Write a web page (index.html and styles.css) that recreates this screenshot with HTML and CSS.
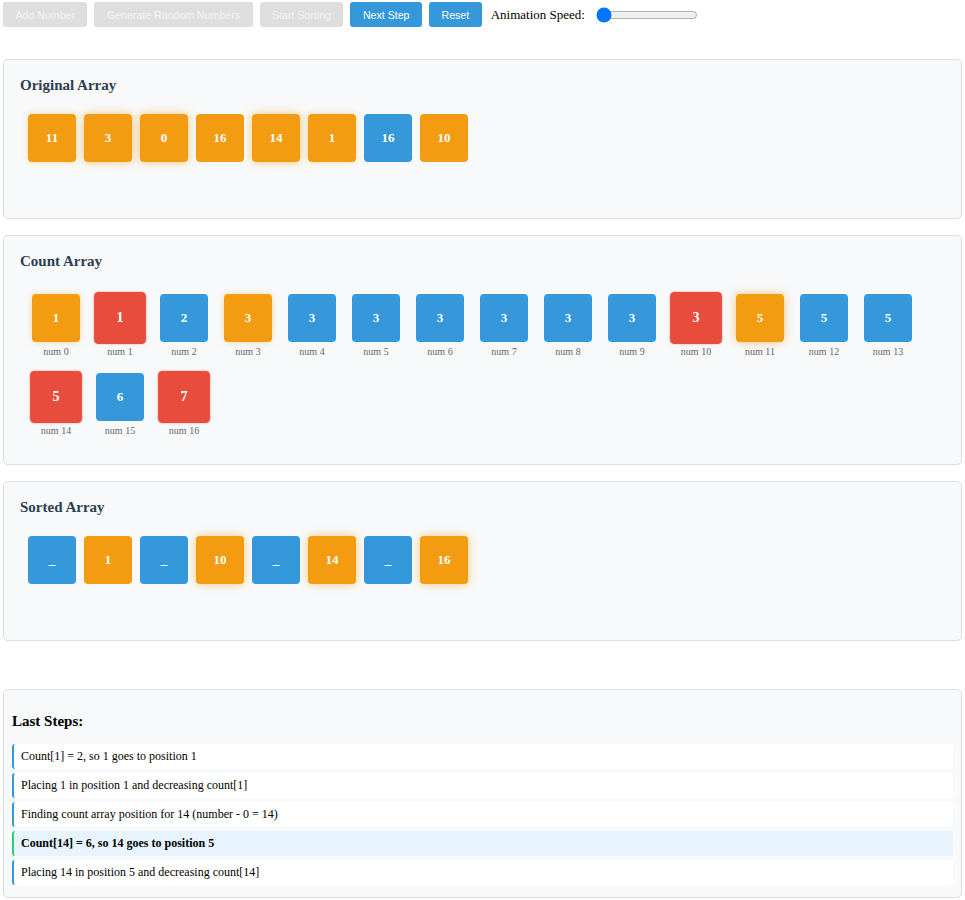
FILE: index.html
```html
<!DOCTYPE html>
<html>
<head>
<meta charset="utf-8">
<title>Counting Sort Visualizer</title>
<link rel="stylesheet" href="styles.css">
</head>
<body>
<div class="controls">
  <button class="btn" disabled>Add Number</button>
  <button class="btn" disabled>Generate Random Numbers</button>
  <button class="btn" disabled>Start Sorting</button>
  <button class="btn active">Next Step</button>
  <button class="btn active">Reset</button>
  <label class="speed-label">Animation Speed:</label>
  <input class="speed" type="range" min="1" max="10" value="1">
</div>

<section class="card">
  <h3 class="card-title">Original Array</h3>
  <div class="array">
    <div class="box orange glow-soft">11</div>
    <div class="box orange glow">3</div>
    <div class="box orange glow">0</div>
    <div class="box orange">16</div>
    <div class="box orange glow">14</div>
    <div class="box orange glow-soft">1</div>
    <div class="box blue">16</div>
    <div class="box orange">10</div>
  </div>
</section>

<section class="card">
  <h3 class="card-title">Count Array</h3>
  <div class="array count">
    <div class="item"><div class="box orange glow-soft">1</div><span class="label">num 0</span></div>
    <div class="item"><div class="box red">1</div><span class="label">num 1</span></div>
    <div class="item"><div class="box blue">2</div><span class="label">num 2</span></div>
    <div class="item"><div class="box orange glow-soft">3</div><span class="label">num 3</span></div>
    <div class="item"><div class="box blue">3</div><span class="label">num 4</span></div>
    <div class="item"><div class="box blue">3</div><span class="label">num 5</span></div>
    <div class="item"><div class="box blue">3</div><span class="label">num 6</span></div>
    <div class="item"><div class="box blue">3</div><span class="label">num 7</span></div>
    <div class="item"><div class="box blue">3</div><span class="label">num 8</span></div>
    <div class="item"><div class="box blue">3</div><span class="label">num 9</span></div>
    <div class="item"><div class="box red">3</div><span class="label">num 10</span></div>
    <div class="item"><div class="box orange glow">5</div><span class="label">num 11</span></div>
    <div class="item"><div class="box blue">5</div><span class="label">num 12</span></div>
    <div class="item"><div class="box blue">5</div><span class="label">num 13</span></div>
    <div class="item"><div class="box red">5</div><span class="label">num 14</span></div>
    <div class="item"><div class="box blue">6</div><span class="label">num 15</span></div>
    <div class="item"><div class="box red">7</div><span class="label">num 16</span></div>
  </div>
</section>

<section class="card">
  <h3 class="card-title">Sorted Array</h3>
  <div class="array">
    <div class="box blue">_</div>
    <div class="box orange">1</div>
    <div class="box blue">_</div>
    <div class="box orange glow">10</div>
    <div class="box blue">_</div>
    <div class="box orange glow">14</div>
    <div class="box blue">_</div>
    <div class="box orange glow">16</div>
  </div>
</section>

<section class="card steps-card">
  <h3 class="steps-title">Last Steps:</h3>
  <div class="step">Count[1] = 2, so 1 goes to position 1</div>
  <div class="step">Placing 1 in position 1 and decreasing count[1]</div>
  <div class="step">Finding count array position for 14 (number - 0 = 14)</div>
  <div class="step current">Count[14] = 6, so 14 goes to position 5</div>
  <div class="step">Placing 14 in position 5 and decreasing count[14]</div>
</section>
</body>
</html>
```

FILE: styles.css
```css
body {
  margin: 0;
  padding: 2px 3px;
  font-family: "Liberation Serif", "Times New Roman", serif;
  background: #fff;
  color: #000;
}

.controls {
  display: flex;
  align-items: center;
  gap: 7px;
  margin-bottom: 32px;
}

.btn {
  font-family: "Liberation Sans", Arial, sans-serif;
  font-size: 10.6px;
  height: 25px;
  padding: 0 12.5px;
  border: none;
  border-radius: 3px;
  background: #3498db;
  color: #fff;
}

.btn:disabled {
  background: #dedede;
  color: #f4f4f4;
}

.speed-label {
  font-size: 13px;
  margin-left: 2px;
}

.speed {
  width: 102px;
  margin: 0 0 0 4px;
  accent-color: #0075ff;
}

.card {
  background: #f8f9fa;
  border: 1px solid #ddd;
  border-radius: 5px;
  padding: 16px;
  margin-bottom: 16px;
}

.card-title {
  margin: 0 0 12px;
  font-size: 15px;
  line-height: 18px;
  color: #2c3e50;
}

.array {
  display: flex;
  flex-wrap: wrap;
  padding: 4px;
  min-height: 96px;
  box-sizing: border-box;
}

.box {
  width: 48px;
  height: 48px;
  margin: 4px;
  border-radius: 4px;
  display: flex;
  align-items: center;
  justify-content: center;
  color: #fff;
  font-weight: bold;
  font-size: 13px;
}

.orange { background: #f39c12; }
.blue { background: #3498db; }
.red {
  background: #e74c3c;
  transform: scale(1.08);
  box-shadow: 0 0 2px rgba(231, 76, 60, 0.6);
}

.glow { box-shadow: 0 0 10px rgba(243, 156, 18, 0.55); }
.glow-soft { box-shadow: 0 0 6px rgba(243, 156, 18, 0.35); }

.count .item {
  width: 64px;
  padding: 8px;
  box-sizing: border-box;
  display: flex;
  flex-direction: column;
  align-items: center;
}

.count .box {
  margin: 0;
  flex-shrink: 0;
}

.label {
  margin-top: 4px;
  font-size: 10px;
  line-height: 11px;
  color: #666;
  white-space: nowrap;
}

.steps-card {
  margin-top: 48px;
  padding: 8px;
}

.steps-title {
  margin: 14px 0;
  font-size: 15px;
  line-height: 18px;
}

.step {
  background: #fff;
  border-left: 2px solid #3498db;
  border-radius: 3px;
  height: 25px;
  line-height: 25px;
  padding-left: 7px;
  margin-bottom: 4px;
  font-size: 12px;
}

.step.current {
  background: #e8f4fd;
  border-left-color: #2ecc71;
  font-weight: bold;
}
```
